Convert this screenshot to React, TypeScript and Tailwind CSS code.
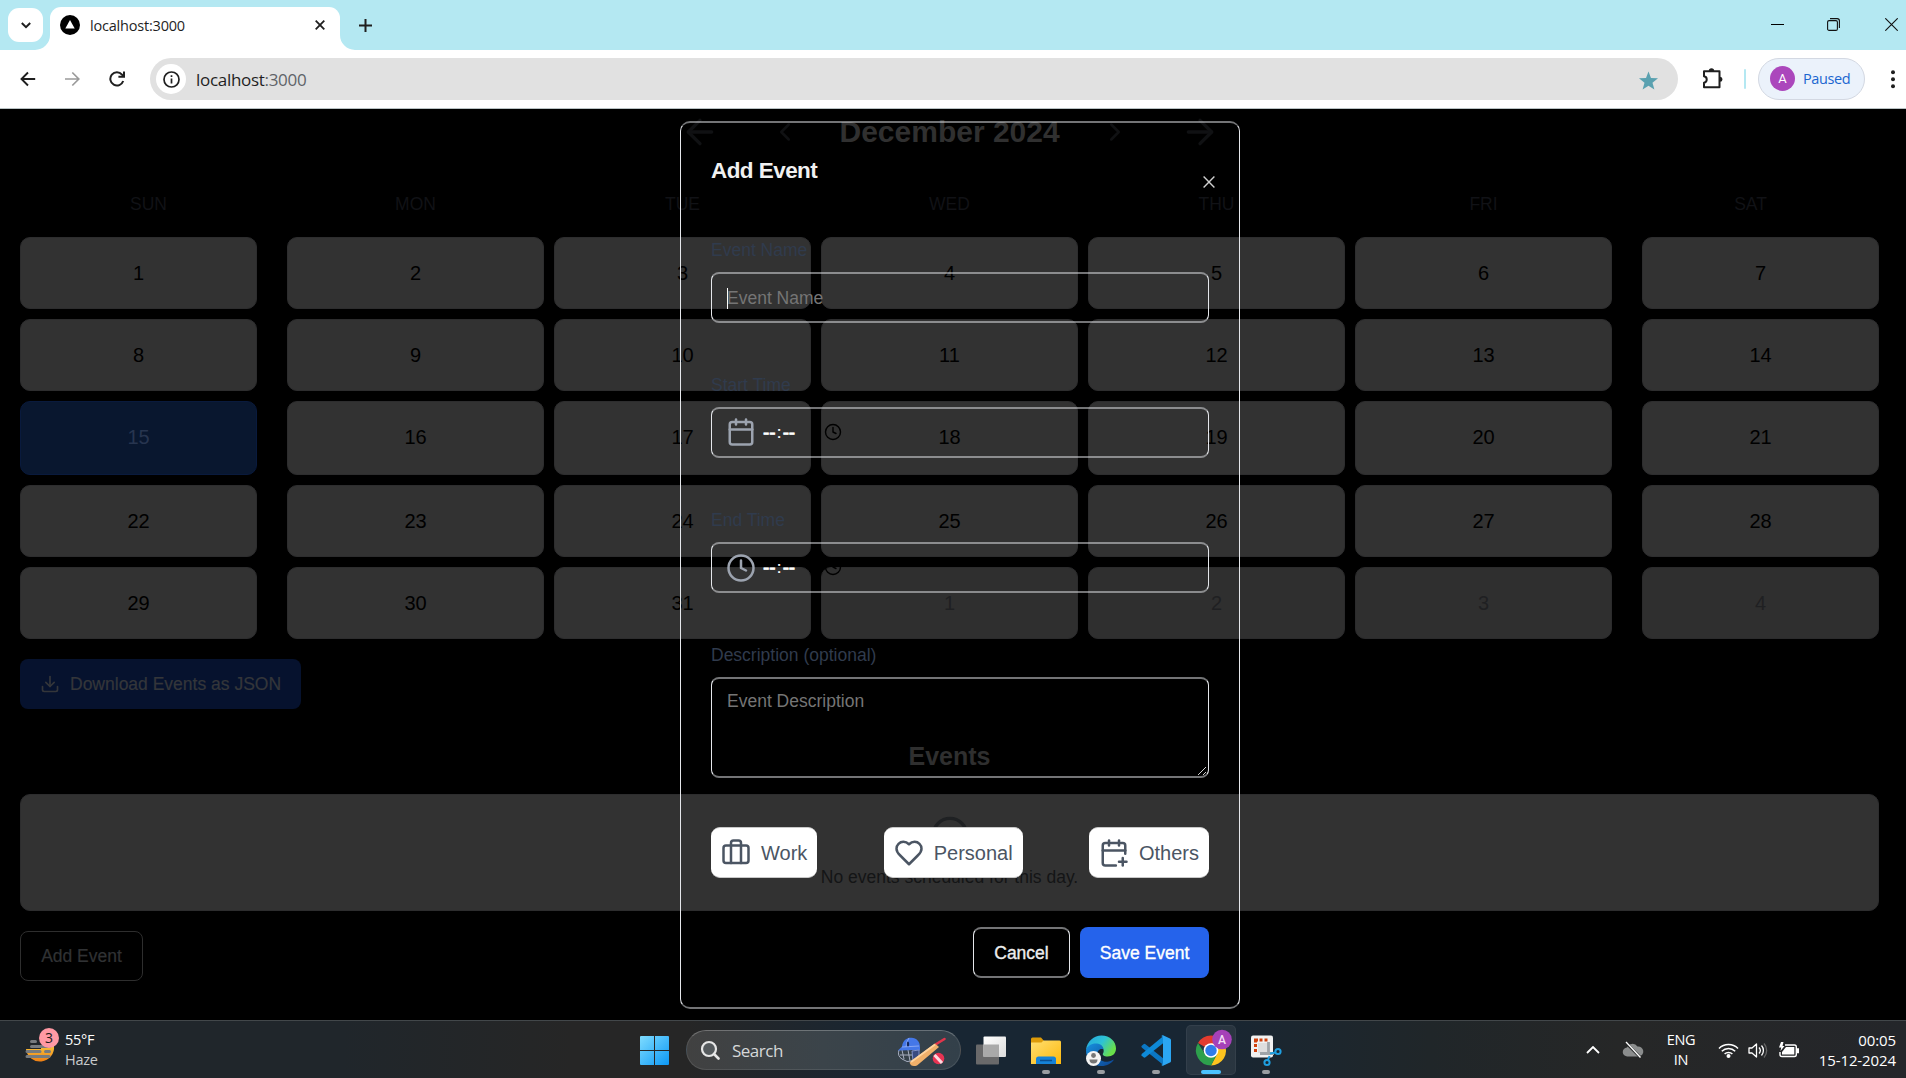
import React from "react";
import {
  ArrowLeft,
  ArrowRight,
  Briefcase,
  Calendar,
  CalendarPlus,
  ChevronLeft,
  ChevronRight,
  CircleAlert,
  Clock,
  Download,
} from "lucide-react";

const days = ["SUN", "MON", "TUE", "WED", "THU", "FRI", "SAT"];

const weeks: number[][] = [
  [1, 2, 3, 4, 5, 6, 7],
  [8, 9, 10, 11, 12, 13, 14],
  [15, 16, 17, 18, 19, 20, 21],
  [22, 23, 24, 25, 26, 27, 28],
  [29, 30, 31, 1, 2, 3, 4],
];

function TabStrip() {
  return (
    <div className="flex h-[50px] shrink-0 items-start bg-[#b4e8f2] pl-2">
      <div className="mt-2 flex h-[34px] w-[35px] items-center justify-center rounded-[11px] bg-white">
        <svg width="10" height="7" viewBox="0 0 10 7" fill="none" stroke="#1f1f1f" strokeWidth="2">
          <path d="M0.8 1l4.2 4.2L9.2 1" />
        </svg>
      </div>
      <div className="relative mt-[7px] ml-[7px] flex h-[43px] w-[290px] items-center rounded-t-[11px] bg-white pl-[10px]">
        <svg className="absolute bottom-0 -left-[15px]" width="15" height="15" viewBox="0 0 15 15">
          <path d="M15 0v15H0A15 15 0 0 0 15 0z" fill="#fff" />
        </svg>
        <svg className="absolute -right-[15px] bottom-0" width="15" height="15" viewBox="0 0 15 15">
          <path d="M0 0v15h15A15 15 0 0 1 0 0z" fill="#fff" />
        </svg>
        <svg className="mb-[7px]" width="20" height="20" viewBox="0 0 20 20">
          <circle cx="10" cy="10" r="10" fill="#000" />
          <path d="M10 5l4.7 8.6H5.3z" fill="#fff" />
        </svg>
        <span className="mb-[6px] ml-[10px] w-[94px] text-[14.5px] leading-5 tracking-[-0.2px] whitespace-nowrap text-[#1f1f1f]">
          localhost:3000
        </span>
        <svg className="mb-[7px] ml-[131px]" width="10" height="10" viewBox="0 0 10 10" stroke="#1f1f1f" strokeWidth="1.8">
          <path d="M0.7 0.7l8.6 8.6M9.3 0.7L0.7 9.3" />
        </svg>
      </div>
      <svg className="mt-[19px] ml-[19px]" width="13" height="13" viewBox="0 0 13 13" stroke="#1f1f1f" strokeWidth="2">
        <path d="M6.5 0v13M0 6.5h13" />
      </svg>
      <svg className="mt-[18px] ml-auto" width="13" height="13" viewBox="0 0 13 13" stroke="#000" strokeWidth="1">
        <path d="M0 6.5h13" />
      </svg>
      <svg className="mt-[18px] ml-[43px]" width="13" height="13" viewBox="0 0 13 13" fill="none" stroke="#111" strokeWidth="1.1">
        <rect x="0.6" y="2.6" width="9.8" height="9.8" rx="1.5" />
        <path d="M3 .6h7.2a2.2 2.2 0 0 1 2.2 2.2V10" />
      </svg>
      <svg className="mt-[18px] mr-2 ml-[45px]" width="13" height="13" viewBox="0 0 13 13" stroke="#111" strokeWidth="1.1">
        <path d="M0.3 0.3l12.4 12.4M12.7 0.3L0.3 12.7" />
      </svg>
    </div>
  );
}

function Toolbar() {
  return (
    <div className="flex h-[59px] shrink-0 items-center border-b border-[#b9c2c4] bg-white pl-5">
      <svg width="16" height="16" viewBox="0 0 16 16" fill="none" stroke="#1f1f1f" strokeWidth="1.9">
        <path d="M15.2 8H2M8 1.5L1.5 8l6.500 6.500" />
      </svg>
      <svg className="ml-[29px]" width="16" height="16" viewBox="0 0 16 16" fill="none" stroke="#9a9a9a" strokeWidth="1.7">
        <path d="M0 8h13.500M7.300 1.500L13.800 8l-6.500 6.500" />
      </svg>
      <svg className="ml-[28px]" width="16" height="16" viewBox="0 0 16 16" fill="none" stroke="#1f1f1f" strokeWidth="2">
        <path d="M14.2 10A6.6 6.6 0 1 1 13 3.7L14 5" />
        <path d="M15 .4v5.4H9.4" />
      </svg>
      <div className="ml-[25px] flex h-[42px] w-[1528px] items-center rounded-full bg-[#e1e1e1] pl-[6px]">
        <div className="flex size-[30px] items-center justify-center rounded-full bg-white">
          <svg width="17" height="17" viewBox="0 0 17 17" fill="none" stroke="#1f1f1f" strokeWidth="1.7">
            <circle cx="8.5" cy="8.5" r="7.5" />
            <path d="M8.5 7.5v5M8.5 4.3V6" />
          </svg>
        </div>
        <span className="mt-px ml-[10px] w-[110px] text-[17px] leading-6 tracking-[-0.3px] whitespace-nowrap text-[#1f1f1f]">
          localhost<span className="text-[#5f6368]">:3000</span>
        </span>
        <svg className="mt-[3px] mr-5 ml-auto" width="19" height="19" viewBox="0 0 20 19" fill="#5aa1b0">
          <path d="M10 0l2.6 6.8 7.4.4-5.8 4.6 2 7.2-6.2-4.1L3.800 19l2-7.200L0 7.200l7.400-.4z" />
        </svg>
      </div>
      <svg className="mb-[2px] ml-[24px]" width="21" height="21" viewBox="0 0 21 21" fill="none" stroke="#1f1f1f" strokeWidth="2" strokeLinejoin="round">
        <path d="M2 3.200h15.500v16H2v-4.400a3.300 3.300 0 0 0 0-6.500z" />
        <path d="M6.800 3a2.700 2.700 0 0 1 5.400 0zM18 8.800a2.500 2.500 0 0 1 0 5z" fill="#1f1f1f" stroke="none" />
      </svg>
      <div className="mr-3 ml-[21px] h-5 w-[2px] rounded bg-[#b4e8f2]" />
      <div className="flex h-[42px] w-[107px] items-center rounded-full border border-[#d3d8e2] bg-[#ebf2fb] pl-[11px]">
        <div className="mb-[1px] flex size-[25px] items-center justify-center rounded-full bg-[#ab47bc] font-[Roboto] text-[13px] text-white">
          A
        </div>
        <span className="mb-px ml-2 text-[14.500px] tracking-[-0.4px] text-[#1a66d0]">Paused</span>
      </div>
      <svg className="ml-[26px]" width="4" height="19" viewBox="0 0 4 19" fill="#1f1f1f">
        <circle cx="2" cy="2.200" r="2" />
        <circle cx="2" cy="9.200" r="2" />
        <circle cx="2" cy="16.200" r="2" />
      </svg>
    </div>
  );
}

function cellMargin(col: number) {
  if (col === 0) return "ml-[5px] mr-[25px]";
  if (col === 6) return "ml-[25px] mr-[5px]";
  return "mx-[5px]";
}

function cellColor(row: number, col: number) {
  if (row === 2 && col === 0) return "h-[74px] pb-[2px] bg-[#09172f] text-[#27354f] border-[#091a3d]";
  if (row === 2) return "h-[74px] pb-[2px] bg-[#323232] text-black border-[#2d2d2e]";
  if (row === 4 && col > 2) return "h-[72px] pb-px bg-[#2f2f2f] text-[#1f2022] border-[#2b2b2c]";
  return "h-[72px] pb-px bg-[#323232] text-black border-[#2d2d2e]";
}

function CalendarPage() {
  return (
    <div className="flex w-[1899px] flex-col px-[15px]">
      <div className="mt-[3px] flex h-10 items-center justify-center text-[#101113]">
        <ArrowLeft size={40} />
        <ChevronLeft size={30} className="ml-[50px]" />
        <h1 className="mx-[40px] w-[220px] text-center text-[30px] leading-9 font-bold whitespace-nowrap text-[#303030]">December 2024</h1>
        <ChevronRight size={30} />
        <ArrowRight size={40} className="ml-[50px]" />
      </div>
      <div className="mt-[42px] grid h-5 grid-cols-7 text-center text-[17.5px] leading-5 text-[#111216]">
        {days.map((d) => (
          <div key={d}>{d}</div>
        ))}
      </div>
      <div className="mt-[23px] flex flex-col gap-[10px]">
        {weeks.map((week, r) => (
          <div key={r} className="grid grid-cols-7">
            {week.map((n, c) => (
              <div
                key={c}
                className={`flex items-center justify-center rounded-[10px] border text-[20px] ${cellMargin(c)} ${cellColor(r, c)}`}
              >
                {n}
              </div>
            ))}
          </div>
        ))}
      </div>
      <button className="mt-5 ml-[5px] flex h-[50px] w-[281px] items-center gap-[10px] rounded-[8px] bg-[#06122e] pl-5 text-[17.5px] whitespace-nowrap text-[#34363a] [-webkit-text-stroke:0.2px]">
        <Download size={20} />
        Download Events as JSON
      </button>
      <h2 className="mt-8 text-center text-[25px] leading-[30px] font-bold text-[#2f2f2f]">Events</h2>
      <div className="mx-[5px] mt-[23px] flex h-[117px] flex-col items-center rounded-[10px] border border-[#2d2d2e] bg-[#323232] pt-5">
        <CircleAlert size={40} className="text-[#1f2123]" />
        <p className="mt-[12px] text-[17.5px] leading-5 text-[#141516]">No events scheduled for this day.</p>
      </div>
      <button className="mt-5 ml-[5px] h-[50px] w-[123px] rounded-[8px] border border-[#2e2e2e] text-[17.5px] text-[#303234] [-webkit-text-stroke:0.2px]">
        Add Event
      </button>
    </div>
  );
}

const outline = "border-x border-y-2 border-x-[#e5e7eb] border-y-[#e5e7eb]/50";

function FieldLabel({ children }: { children: React.ReactNode }) {
  return <div className="h-5 pt-px text-[17.5px] leading-5 text-[#303b4d]">{children}</div>;
}

function TimeField({ label, icon }: { label: string; icon: React.ReactNode }) {
  return (
    <div className="mt-[51px]">
      <FieldLabel>{label}</FieldLabel>
      <div className={`mt-[13px] flex h-[51px] items-center rounded-[8px] pl-[14px] ${outline}`}>
        {icon}
        <div className="ml-[7px] flex w-[32px] justify-between text-[19px] leading-5 text-white [-webkit-text-stroke:0.7px]">
          <span className="tracking-[-0.2px]">--</span>
          <span className="text-[17px] [-webkit-text-stroke:0.2px]">:</span>
          <span className="tracking-[-0.2px]">--</span>
        </div>
        <Clock size={18} strokeWidth={1.9} className="mb-px ml-[29px] text-black" />
      </div>
    </div>
  );
}

function Category({ label, icon }: { label: string; icon: React.ReactNode }) {
  return (
    <button className="flex h-[51px] items-center gap-[10px] rounded-[9px] border-y border-[#c8c8c8] bg-white px-[10px] text-[20px] leading-6 text-[#4b5563]">
      {icon}
      {label}
    </button>
  );
}

function EventDialog() {
  return (
    <div className={`absolute top-3 left-[680px] flex h-[888px] w-[560px] flex-col rounded-[10px] px-[30px] pt-[35px] ${outline}`}>
      <div className="flex h-[24px] justify-between">
        <h2 className="pt-px text-[22.5px] leading-6 font-bold tracking-tight text-[#f1f1f1]">Add Event</h2>
        <svg className="mt-[18px] -mr-[6px] shrink-0" width="12" height="12" viewBox="0 0 12 12" stroke="#cfcfcf" strokeWidth="1.4">
          <path d="M.6.6l10.800 10.800M11.400.6L.6 11.400" />
        </svg>
      </div>
      <div className="mt-[57px]">
        <FieldLabel>Event Name</FieldLabel>
        <div className={`mt-[13px] flex h-[51px] items-center rounded-[8px] pt-px pl-[15px] text-[17.5px] text-[#757575] ${outline}`}>
          <span className="-mr-px h-[21px] w-px bg-white" />
          Event Name
        </div>
      </div>
      <TimeField label="Start Time" icon={<Calendar size={30} className="mb-px text-[#9ca3af]" />} />
      <TimeField label="End Time" icon={<Clock size={30} className="text-[#9ca3af]" />} />
      <div className="mt-[51px]">
        <FieldLabel>Description (optional)</FieldLabel>
        <div className={`relative mt-[13px] h-[101px] rounded-[8px] pt-3 pl-[15px] text-[17.5px] leading-5 text-[#757575] ${outline}`}>
          Event Description
          <svg className="absolute right-[2px] bottom-[1px]" width="8" height="8" viewBox="0 0 8 8" stroke="#d0d0d0" strokeWidth="1">
            <path d="M0 8L8 0M5 8l3-3" />
          </svg>
        </div>
      </div>
      <div className="mt-[49px] flex justify-between">
        <Category label="Work" icon={<Briefcase size={30} />} />
        <Category
          label="Personal"
          icon={
            <svg width="30" height="30" viewBox="0 0 24 24" fill="none" stroke="currentColor" strokeWidth="2" strokeLinecap="round" strokeLinejoin="round">
              <path d="M19 14c1.490-1.460 3-3.210 3-5.500A5.500 5.500 0 0 0 16.500 3c-1.760 0-3 .5-4.500 2-1.500-1.500-2.740-2-4.500-2A5.500 5.500 0 0 0 2 8.500c0 2.300 1.500 4.050 3 5.500l7 7Z" />
            </svg>
          }
        />
        <Category label="Others" icon={<CalendarPlus size={30} />} />
      </div>
      <div className="mt-[49px] flex justify-end gap-[10px] text-[17.5px] [-webkit-text-stroke:0.35px]">
        <button className={`h-[51px] w-[97px] rounded-[8px] pt-px text-[#ededed] ${outline}`}>Cancel</button>
        <button className="h-[51px] w-[129px] rounded-[8px] bg-[#2563eb] pt-px text-white">Save Event</button>
      </div>
    </div>
  );
}

function WeatherIcon() {
  return (
    <svg width="34" height="38" viewBox="0 0 34 38">
      <defs>
        <linearGradient id="sun" x1="0" y1="0" x2="0" y2="1">
          <stop offset="0" stopColor="#f7c23c" />
          <stop offset="1" stopColor="#f07f13" />
        </linearGradient>
      </defs>
      <path d="M1 22h15v-3h13a14 14 0 0 1-28 3z" fill="url(#sun)" />
      <g stroke="#777b7f" strokeWidth="3" strokeLinecap="round">
        <path d="M6.500 14.500h4M6.500 19.500h18M2 24.500h13M20.500 24.500h4M2 29.500h22" />
      </g>
      <circle cx="24" cy="11" r="10" fill="#ff99a4" />
      <text x="24" y="16" textAnchor="middle" fontFamily="Open Sans, sans-serif" fontSize="14" fill="#1b1b1b">3</text>
    </svg>
  );
}

function SportsIcon() {
  return (
    <svg width="50" height="31" viewBox="0 0 50 31" fill="none">
      <path d="M2 14q-2 6 3 9 5 4 10 2M5 14l2 9M11 14l2 11M3 19h12" stroke="#a7aebf" strokeWidth="1" />
      <path d="M1 14.500l4-4C6 4 10 1.500 14.500 1.800c5 0 8.500 4 8.500 9.200v3.500L19 14z" fill="#4477e8" />
      <path d="M5 11l17-1M12 2q-3 4-3 9" stroke="#89a8f4" />
      <ellipse cx="11" cy="8" rx="1.200" ry="2.600" fill="#14285e" />
      <path d="M15 15l7-1v7l-6 4z" fill="#394b80" stroke="#8191c9" />
      <path d="M38.500 8.500l9-5.500" stroke="#e2354b" strokeWidth="2.600" strokeLinecap="round" />
      <path d="M12.500 26.500L38 7.500l4 3.500-22 18.500q-6 2-7.500-3z" fill="#f0b06a" />
      <path d="M14 26L38 8.500" stroke="#ffd39d" strokeWidth="2" />
      <circle cx="41.500" cy="22.500" r="5.800" fill="#e83352" />
      <path d="M37.500 19l7.500 8" stroke="#fcd8de" strokeWidth="3" />
    </svg>
  );
}

function AppSlot({ children, mark = "dot" }: { children: React.ReactNode; mark?: "none" | "dot" | "active" }) {
  return (
    <div className="flex w-[55px] justify-center">
      <div
        className={
          mark === "active"
            ? "flex h-[50px] w-[50px] flex-col items-center rounded-[5px] border border-white/5 bg-white/[0.07]"
            : "flex h-[50px] w-[50px] flex-col items-center border border-transparent"
        }
      >
        <div className="mt-[5px] h-[39px] w-10">{children}</div>
        {mark === "dot" && <div className="h-1 w-2 rounded-full bg-[#999da1]" />}
        {mark === "active" && <div className="h-1 w-5 rounded-full bg-[#4cc2ff]" />}
      </div>
    </div>
  );
}

function TaskViewIcon() {
  return (
    <svg width="40" height="39" viewBox="0 0 40 39">
      <defs>
        <linearGradient id="tvf" x1="0" y1="0" x2="1" y2="1">
          <stop offset="0" stopColor="#fff" />
          <stop offset="1" stopColor="#dcdcdc" />
        </linearGradient>
      </defs>
      <rect x="5" y="13.500" width="23" height="20" rx="1" fill="#69696a" />
      <rect x="12.500" y="5.500" width="22.500" height="20.500" rx="1" fill="url(#tvf)" />
      <path d="M12.500 13.500H28V26H12.500z" fill="#a9a9a9" />
    </svg>
  );
}

function ExplorerIcon() {
  return (
    <svg width="40" height="39" viewBox="0 0 40 39">
      <defs>
        <linearGradient id="fold" x1="0" y1="0" x2="1" y2="1">
          <stop offset="0" stopColor="#ffdf71" />
          <stop offset="1" stopColor="#fdb90d" />
        </linearGradient>
      </defs>
      <path d="M5 12V8q0-1.500 1.500-1.500h8.500l3 3.500H34v5H5z" fill="#dd9b09" />
      <path d="M5 11.500h10.500l2-2H33.500q1.500 0 1.500 1.500v22H5z" fill="url(#fold)" />
      <path d="M10 33v-5q0-2.500 2.500-2.500h15q2.500 0 2.500 2.500v5z" fill="#1683d8" />
      <path d="M14 29.500h12" stroke="#0b4f91" strokeWidth="1.500" />
    </svg>
  );
}

function EdgeIcon() {
  return (
    <svg width="40" height="39" viewBox="0 0 40 39">
      <defs>
        <linearGradient id="edgeTop" x1="0" y1="0" x2="1" y2=".5">
          <stop offset="0" stopColor="#25a5de" />
          <stop offset=".55" stopColor="#2dc2d6" />
          <stop offset="1" stopColor="#6ae04a" />
        </linearGradient>
        <linearGradient id="edgeLow" x1="0" y1="0" x2="1" y2="1">
          <stop offset="0" stopColor="#1790de" />
          <stop offset="1" stopColor="#0c4391" />
        </linearGradient>
      </defs>
      <path d="M5 19c1-9 8-14.500 15.500-14.500C29 4.500 35 10.500 35 17.500c0 5-3.500 8-8.500 8-3.500 0-5.500-1.500-4.500-3 2-3 0-8.500-6.500-8.500-5 0-9 2-10.500 5z" fill="url(#edgeTop)" />
      <path d="M5 19c1.500-4.500 6-7 11-6.500 4 .5 6.500 3 6.500 6-3-1.500-7 1-6 6 1 5 6.500 7 11 6 3-.5 5-2 5.500-2-2.500 4-7 6.500-12.500 6.500C12 35 4.500 28 5 19z" fill="url(#edgeLow)" />
      <circle cx="12.500" cy="27.500" r="7.500" fill="#f4f4f4" />
      <circle cx="12.500" cy="24.500" r="2.400" fill="#757575" />
      <path d="M8.500 28.500h8q0 4-4 4t-4-4z" fill="#757575" />
    </svg>
  );
}

function CodeIcon() {
  return (
    <svg width="40" height="39" viewBox="0 0 40 39">
      <path d="M5.500 15l2-1.800q1-.7 2 0L28 28v6.500L6 16.800q-1-1-.5-1.800z" fill="#0b77c4" />
      <path d="M5.500 24.500l2 1.800q1 .7 2 0L28 11.500V4.500L6 22.700q-1 1-.5 1.800z" fill="#0e8ad8" />
      <path d="M27.500 4.500L34 7.500q1 .5 1 1.600v20.800q0 1.100-1 1.600L27.500 34.500q-1.500.5-2.200-.8 1.700.3 1.700-1.700V7q0-2-1.700-1.700.7-1.300 2.200-.8z" fill="#2ba6f3" />
    </svg>
  );
}

function ChromeIcon() {
  return (
    <svg width="40" height="39" viewBox="0 0 40 39" className="overflow-visible">
      <path d="M20 19.500L7 12a15 15 0 0 1 26 0z" fill="#e33b2e" />
      <path d="M20 12.500h13.300A15 15 0 0 1 20 34.500l6.100-11.500z" fill="#fcc31e" />
      <path d="M7 12l6.900 11 6.100 3.500 6.100-3.500L20 34.500A15 15 0 0 1 7 12z" fill="#2da04c" />
      <circle cx="20" cy="19.500" r="7.300" fill="#fff" />
      <circle cx="20" cy="19.500" r="5.700" fill="#2f7cea" />
      <circle cx="31" cy="8.500" r="9.800" fill="#a541b8" />
      <text x="31" y="13" textAnchor="middle" fontFamily="Roboto, sans-serif" fontSize="12" fontWeight="500" fill="#f3dff6">A</text>
    </svg>
  );
}

function SnipIcon() {
  return (
    <svg width="40" height="39" viewBox="0 0 40 39" fill="none">
      <rect x="5" y="4.500" width="22" height="22" rx="2" fill="#f1f1f1" />
      <path d="M12 12h10v10H12z" fill="#dedede" />
      <g fill="#d1400c">
        <path d="M8 7.500h4v3h-1v1H8zM13.500 7.500h3v3h-3zM18.500 7.500h3v3h-3zM8 13h3v3H8zM8 18h3v3H8z" />
      </g>
      <path d="M22.500 11v13M14 22.500h14" stroke="#9fa4a8" strokeWidth="2.800" />
      <circle cx="32" cy="20.500" r="2.600" stroke="#1f9fe0" strokeWidth="2" />
      <circle cx="21" cy="31.500" r="2.600" stroke="#1f9fe0" strokeWidth="2" />
      <path d="M24 22.500l5.500-1M22 29l1.500-4" stroke="#1f9fe0" strokeWidth="2" />
    </svg>
  );
}

function Taskbar() {
  return (
    <div className="flex h-[58px] shrink-0 items-start border-t border-[#42474a] bg-[linear-gradient(90deg,#20262b_0%,#20262b_18%,#262626_30%,#262626_36%,#182633_47%,#182633_63%,#202629_75%,#262727_85%,#24262a_100%)] text-white">
      <div className="flex h-[57px] w-[640px] pl-[25px]">
        <div className="mt-[6px]">
          <WeatherIcon />
        </div>
        <div className="mt-[9px] ml-[6px] text-[14.5px] leading-5 tracking-[-0.3px]">
          <div>55°F</div>
          <div className="text-[#c9cbcc]">Haze</div>
        </div>
      </div>
      <svg className="mt-[15px]" width="29" height="29" viewBox="0 0 29 29">
        <defs>
          <linearGradient id="win" x1="0" y1="0" x2="1" y2="1">
            <stop offset="0" stopColor="#7fdcff" />
            <stop offset="1" stopColor="#0c98f5" />
          </linearGradient>
        </defs>
        <path d="M0 1q0-1 1-1h13v14H0zM15 0h13q1 0 1 1v13H15zM0 15h14v14H1q-1 0-1-1zM15 15h14v13q0 1-1 1H15z" fill="url(#win)" />
      </svg>
      <div className="mt-[9px] ml-[17px] flex h-10 w-[275px] items-center rounded-full border border-white/10 border-t-white/25 bg-[linear-gradient(90deg,#414141,#3b444a_50%,#33404a)] pl-[13px]">
        <svg width="20" height="20" viewBox="0 0 20 20" fill="none" stroke="#e6e6e6" strokeWidth="2.200">
          <circle cx="9" cy="9" r="7" fill="#555a5d" />
          <path d="M14 14l4.500 4.500" strokeWidth="2.600" strokeLinecap="round" />
        </svg>
        <span className="mt-px ml-[12px] w-[51px] text-[17px] leading-6 tracking-[-0.5px] text-[#d6d8d9]">Search</span>
        <div className="mt-[3px] ml-[114px]">
          <SportsIcon />
        </div>
      </div>
      <div className="mt-1 ml-[2px] flex">
        <AppSlot mark="none"><TaskViewIcon /></AppSlot>
        <AppSlot><ExplorerIcon /></AppSlot>
        <AppSlot><EdgeIcon /></AppSlot>
        <AppSlot><CodeIcon /></AppSlot>
        <AppSlot mark="active"><ChromeIcon /></AppSlot>
        <AppSlot><SnipIcon /></AppSlot>
      </div>
      <div className="mr-[10px] ml-auto flex h-[57px] items-center pt-px">
        <svg width="14" height="8" viewBox="0 0 14 8" fill="none" stroke="#fff" strokeWidth="1.800">
          <path d="M1 7l6-6 6 6" />
        </svg>
        <svg className="ml-[22px]" width="22" height="18" viewBox="0 0 22 18" fill="none">
          <path d="M5.500 15.500A4.500 4.500 0 0 1 5 6.500 6 6 0 0 1 15.500 5.500a5 5 0 0 1 1.500 10z" fill="#8b8d8d" />
          <path d="M3 1l16 16" stroke="#262727" strokeWidth="2.500" />
          <path d="M4 1l14.500 15.500" stroke="#fff" strokeWidth="1.300" />
        </svg>
        <div className="ml-[21px] w-[32px] text-center text-[14.500px] leading-5 tracking-[-0.3px]">
          <div>ENG</div>
          <div>IN</div>
        </div>
        <svg className="ml-[21px]" width="21" height="16" viewBox="0 0 21 16" fill="none" stroke="#fff" strokeWidth="1.500">
          <path d="M1 6.500a13.300 13.300 0 0 1 19 0M3.800 9.300a9.400 9.400 0 0 1 13.400 0M6.600 12a5.500 5.500 0 0 1 7.800 0" />
          <circle cx="10.500" cy="14" r="2" fill="#fff" stroke="none" />
        </svg>
        <svg className="ml-[9px]" width="21" height="17" viewBox="0 0 21 17" fill="none" stroke="#fff" strokeWidth="1.300">
          <path d="M1 6h3l4.500-4v13L4 11H1z" strokeLinejoin="round" />
          <path d="M11 5.500a4.500 4.500 0 0 1 0 6M13.500 3.500a7.500 7.500 0 0 1 0 10" />
          <path d="M16 1.500a10.500 10.500 0 0 1 0 14" stroke="#666" />
        </svg>
        <svg className="mb-[2px] ml-[9px]" width="21" height="17" viewBox="0 0 21 17" fill="none" stroke="#fff" strokeWidth="1.400">
          <path d="M7 4h9.500q1.800 0 1.800 2v7.500q0 2-1.800 2H4q-2 0-2-2V11" />
          <path d="M8 6h8.300v7.500H4V11z" fill="#fff" stroke="none" />
          <path d="M19 8h1.300v3.500H19" fill="#fff" />
          <path d="M3 1L1 6.500h2.200L2.500 10 6.500 5H4.500L5.500 1z" fill="#fff" stroke="none" />
        </svg>
        <div className="mb-px ml-[13px] w-[84px] text-right text-[15px] leading-5 tracking-[-0.1px] whitespace-nowrap">
          <div>00:05</div>
          <div>15-12-2024</div>
        </div>
      </div>
    </div>
  );
}

export default function App() {
  return (
    <div className="flex h-[1078px] w-[1906px] flex-col overflow-hidden bg-black font-['Open_Sans',sans-serif]">
      <TabStrip />
      <Toolbar />
      <main className="relative h-[911px] shrink-0 overflow-hidden bg-black font-['Liberation_Sans',Arial,sans-serif]">
        <CalendarPage />
        <EventDialog />
      </main>
      <Taskbar />
    </div>
  );
}
